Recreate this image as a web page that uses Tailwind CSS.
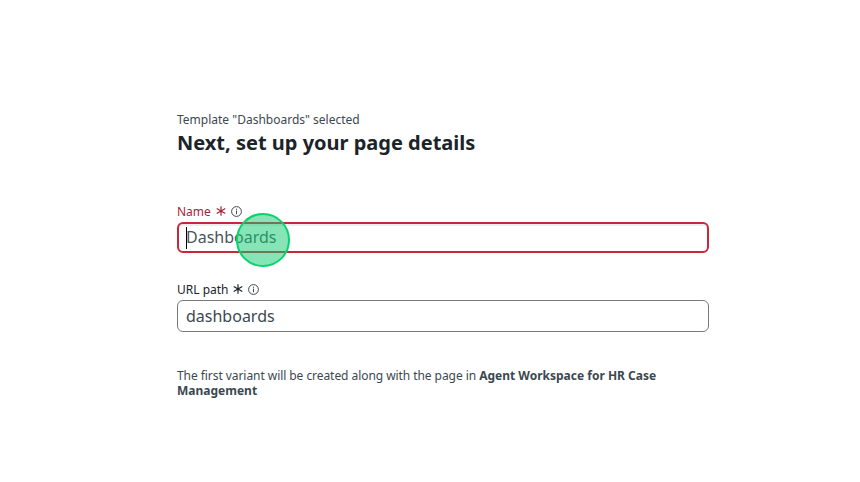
<!DOCTYPE html>
<html lang="en"><head><meta charset="utf-8"><title>Page details</title>
<script src="https://cdn.jsdelivr.net/npm/@tailwindcss/browser@4"></script></head>
<body class="bg-white overflow-hidden font-['Noto_Sans',sans-serif] text-[#1b2429]">
<main class="ml-[177px] w-[532px] pt-[112px]">
<p class="text-[12px] leading-4 text-[#3c484f]">Template "Dashboards" selected</p>
<h1 class="text-[20px] leading-[30px] font-bold">Next, set up your page details</h1>
<div class="mt-[45px] flex h-4 items-center text-[12px] leading-4 text-[#a8233a]"><span class="relative top-px w-[34px]">Name</span>
<svg class="ml-[5px] size-[10px]" viewBox="0 0 10 10" fill="none" stroke="currentColor" stroke-width="1.2"><path d="M5 .3v9.4M.7 2.6l8.6 4.8M.7 7.4l8.6-4.8"/></svg>
<svg class="ml-[5px] size-[11px] text-[#3c484f]" viewBox="0 0 11 11" fill="none" stroke="currentColor"><circle cx="5.5" cy="5.5" r="4.9"/><path d="M5.5 4.6v3.6M5.5 2.7v1.1"/></svg></div>
<div class="relative mt-[3px] flex h-[31px] items-center rounded-[6px] border-2 border-[#c9283a] px-[7px] text-[16px] leading-6 text-[#49545b] shadow-[inset_0_2px_1px_#eeeeee]"><span class="relative top-[-0.5px]">Dashboards</span>
<i class="absolute left-[7px] top-[3px] h-[22px] w-px bg-black"></i>
<i class="absolute left-[56.5px] top-[-11.5px] size-[54px] rounded-full border-2 border-[#08d46c] bg-[#10ca70]/50"></i></div>
<div class="mt-[28px] flex h-4 items-center text-[12px] leading-4"><span class="relative top-px w-[51px] whitespace-nowrap">URL path</span>
<svg class="ml-[5px] size-[10px]" viewBox="0 0 10 10" fill="none" stroke="currentColor" stroke-width="1.2"><path d="M5 .3v9.4M.7 2.6l8.6 4.8M.7 7.4l8.6-4.8"/></svg>
<svg class="ml-[5px] size-[11px] text-[#3c484f]" viewBox="0 0 11 11" fill="none" stroke="currentColor"><circle cx="5.5" cy="5.5" r="4.9"/><path d="M5.5 4.6v3.6M5.5 2.7v1.1"/></svg></div>
<div class="mt-[3px] flex h-8 items-center rounded-[6px] border border-[#77797b] px-2 text-[16px] text-[#3c484f]">dashboards</div>
<p class="mt-9 w-[500px] text-[12px] leading-[15px] text-[#3c484f]"><span class="tracking-[-0.06px]">The first variant will be created along with the page in </span><b class="font-bold">Agent Workspace for HR Case Management</b></p>
</main></body></html>
